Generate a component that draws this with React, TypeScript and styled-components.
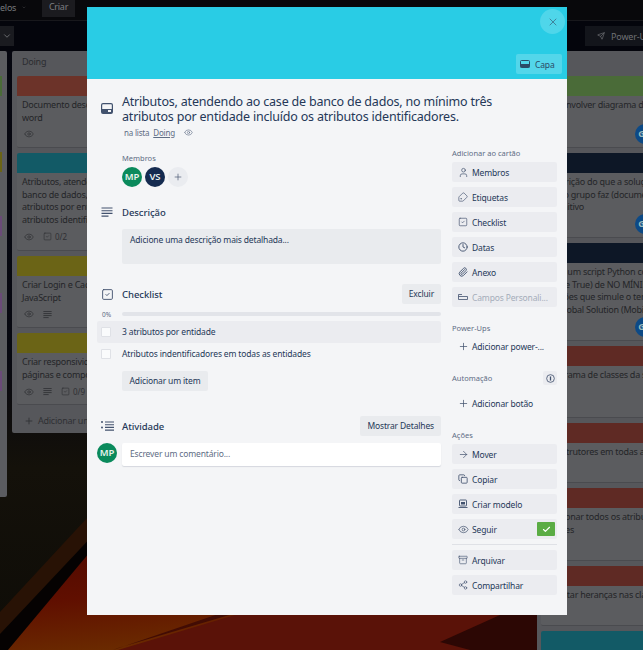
import styled, { createGlobalStyle, css } from 'styled-components';
import {
  Archive,
  ArrowRight,
  Check,
  ChevronDown,
  Clock,
  Copy,
  Eye,
  Paperclip,
  Plus,
  Send,
  Share2,
  SquareCheck,
  Tag,
  User,
  X,
} from 'lucide-react';

const FONT = `'Noto Sans', 'Open Sans', 'Liberation Sans', sans-serif`;

const GlobalStyle = createGlobalStyle`
  html, body {
    margin: 0;
    padding: 0;
    background: #000;
  }
  * {
    box-sizing: border-box;
  }
`;

const DescIcon = ({ size = 12 }: { size?: number }) => (
  <svg width={size} height={size} viewBox="0 0 12 12" fill="none" stroke="currentColor" strokeWidth="1.1">
    <path d="M0.5 2h11M0.5 4.7h11M0.5 7.4h11M0.5 10.1h7" />
  </svg>
);

const ActivityIcon = () => (
  <svg width="13" height="12" viewBox="0 0 13 12" fill="none" stroke="currentColor" strokeWidth="1.1">
    <path d="M4 2h9M4 4.7h9M4 7.4h9M4 10.1h9" />
    <circle cx="1" cy="2" r="1" fill="currentColor" stroke="none" />
    <circle cx="1" cy="7.4" r="1" fill="currentColor" stroke="none" />
  </svg>
);

const CardIcon = () => (
  <svg width="12" height="11" viewBox="0 0 12 11" fill="none">
    <rect x="0.6" y="0.6" width="10.8" height="9.8" rx="1.4" stroke="currentColor" strokeWidth="1.2" />
    <rect x="1" y="6" width="10" height="4" fill="currentColor" />
    <rect x="7" y="7" width="3" height="2" fill="#f4f5f7" />
  </svg>
);

const CoverIcon = () => (
  <svg width="10" height="8" viewBox="0 0 10 8" fill="none">
    <rect x="0.5" y="0.5" width="9" height="7" rx="1" stroke="currentColor" />
    <rect x="0.5" y="4" width="9" height="3.5" fill="currentColor" />
  </svg>
);

const TemplateIcon = () => (
  <svg width="10" height="10" viewBox="0 0 10 10" fill="none" stroke="currentColor" strokeWidth="0.9">
    <rect x="1.5" y="1" width="7" height="6" rx="0.6" />
    <rect x="3" y="3" width="4" height="2.5" fill="currentColor" stroke="none" />
    <path d="M0.5 8.5h9" />
  </svg>
);

const FieldsIcon = () => (
  <svg width="10" height="8" viewBox="0 0 10 8" fill="none" stroke="currentColor" strokeWidth="0.8">
    <path d="M0.5 1.5h3.5M0.5 1.5v5h9v-3h-9" />
  </svg>
);

const InfoIcon = () => (
  <svg width="9" height="9" viewBox="0 0 11 11" fill="none" stroke="currentColor">
    <circle cx="5.5" cy="5.5" r="4.7" />
    <path d="M5.5 3v5" strokeWidth="1.6" />
  </svg>
);

const Wallpaper = () => (
  <WallpaperSvg viewBox="0 0 643 650" preserveAspectRatio="none">
    <defs>
      <linearGradient id="night" x1="0" y1="0" x2="0" y2="1">
        <stop offset="0" stopColor="#05060f" />
        <stop offset="0.55" stopColor="#070810" />
        <stop offset="0.72" stopColor="#14110a" />
        <stop offset="1" stopColor="#0e0c07" />
      </linearGradient>
      <linearGradient id="ember" x1="0" y1="0" x2="0.3" y2="1">
        <stop offset="0" stopColor="#4e0800" />
        <stop offset="0.55" stopColor="#600f00" />
        <stop offset="1" stopColor="#6a2a00" />
      </linearGradient>
    </defs>
    <rect width="643" height="650" fill="url(#night)" />
    <polygon points="150,450 0,612 0,640 100,530 170,470" fill="#281205" />
    <polygon points="0,634 0,650 8,650 110,535 96,532" fill="#050202" />
    <polygon points="8,650 100,540 240,560 330,650" fill="url(#ember)" />
    <polygon points="118,650 235,615 560,600 540,650" fill="#5a1208" />
    <polygon points="113,650 118,648 236,613 230,610" fill="#420c04" />
    <polygon points="440,642 500,615 540,605 540,650 470,650" fill="#2c0704" />
  </WallpaperSvg>
);

type BoardCard = {
  cover: string;
  lines: string[];
  height: number;
  eye?: boolean;
  desc?: boolean;
  checks?: string;
  member?: boolean;
};

const doingCards: BoardCard[] = [
  {
    cover: '#6c3329',
    height: 72,
    lines: ['Documento descritivo do projeto em', 'word'],
    eye: true,
  },
  {
    cover: '#125a66',
    height: 98,
    lines: ['Atributos, atendendo ao case de', 'banco de dados, no mínimo três', 'atributos por entidade incluído os', 'atributos identificadores.'],
    eye: true,
    checks: '0/2',
  },
  {
    cover: '#6b6416',
    height: 72,
    lines: ['Criar Login e Cadastro com', 'JavaScript'],
    eye: true,
    desc: true,
  },
  {
    cover: '#6b6416',
    height: 72,
    lines: ['Criar responsividade em todas as', 'páginas e componentes'],
    eye: true,
    desc: true,
    checks: '0/9',
  },
];

const rightCards: BoardCard[] = [
  { cover: '#4a6b38', height: 72, lines: ['Desenvolver diagrama de'], member: true },
  {
    cover: '#0d1726',
    height: 85,
    lines: ['Descrição do que a solução', 'que o grupo faz (documento', 'Definitivo'],
    member: true,
  },
  {
    cover: '#0d1726',
    height: 98,
    lines: ['Criar um script Python com', '(ou se True) de NO MÍNIMO', 'funções que simule o tempo', 'na Global Solution (Mobile'],
    member: true,
  },
  { cover: '#5f2a24', height: 72, lines: ['Diagrama de classes da solução'] },
  { cover: '#5f2a24', height: 60, lines: ['Construtores em todas as'] },
  { cover: '#5f2a24', height: 73, lines: ['Adicionar todos os atributos', 'classes'] },
  { cover: '#5f2a24', height: 60, lines: ['Adaptar heranças nas classes'] },
  { cover: '#125a66', height: 60, lines: [] },
];

const LabelTag = styled(Tag)`
  transform: rotate(-90deg);
`;

const addActions = [
  { icon: <User size={11} strokeWidth={1.5} />, label: 'Membros' },
  { icon: <LabelTag size={10} strokeWidth={1.6} />, label: 'Etiquetas' },
  { icon: <SquareCheck size={10} strokeWidth={1.6} />, label: 'Checklist' },
  { icon: <Clock size={10} strokeWidth={2.2} />, label: 'Datas' },
  { icon: <Paperclip size={10} strokeWidth={2.2} />, label: 'Anexo' },
];

const BoardList = ({ cards }: { cards: BoardCard[] }) => (
  <>
    {cards.map((card, i) => (
      <Card key={i} $height={card.height}>
        <Cover $color={card.cover} />
        <CardText>
          {card.lines.map((line) => (
            <div key={line}>{line}</div>
          ))}
        </CardText>
        {card.eye && (
          <Meta>
            <Eye size={10} strokeWidth={1.6} />
            {card.desc && <DescIcon size={9} />}
            {card.checks && (
              <MetaItem>
                <SquareCheck size={9} strokeWidth={1.6} /> {card.checks}
              </MetaItem>
            )}
          </Meta>
        )}
        {card.member && (
          <MemberRow>
            <MiniAvatar>G</MiniAvatar>
          </MemberRow>
        )}
      </Card>
    ))}
  </>
);

const App = () => (
  <>
    <GlobalStyle />
    <Page>
      <Wallpaper />
      <TopBar>
        <TopLink>
          elos <ChevronDown size={9} />
        </TopLink>
        <CreateButton>Criar</CreateButton>
      </TopBar>
      <BoardBar>
        <BoardMenu>
          <ChevronDown size={10} />
        </BoardMenu>
        <PowerUps>
          <Send size={8} /> Power-Ups
        </PowerUps>
      </BoardBar>
      <Lists>
        <LeftStub>
          <Strip $color="#4a6b38" $top={25} />
          <Strip $color="#6b6416" $top={56} />
          <Strip $color="#6a4a78" $top={44} />
          <Strip $color="#6a4a78" $top={57} />
          <Strip $color="#6a4a78" $top={58} />
        </LeftStub>
        <DoingList>
          <ListTitle>Doing</ListTitle>
          <BoardList cards={doingCards} />
          <ListFooter>
            <Plus size={10} /> Adicionar um cartão
          </ListFooter>
        </DoingList>
        <RightList>
          <BoardList cards={rightCards} />
        </RightList>
      </Lists>

      <Modal>
        <CoverBand>
          <CloseButton>
            <X size={12} strokeWidth={1.6} />
          </CloseButton>
          <CoverButton>
            <CoverIcon /> Capa
          </CoverButton>
        </CoverBand>
        <ModalBody>
          <TitleRow>
            <TitleIcon>
              <CardIcon />
            </TitleIcon>
            <div>
              <Title>
                Atributos, atendendo ao case de banco de dados, no mínimo três atributos por entidade incluído os atributos identificadores.
              </Title>
              <ListRef>
                na lista <u>Doing</u> <Eye size={9} strokeWidth={1.6} />
              </ListRef>
            </div>
          </TitleRow>

          <Main>
            <MembersBlock>
              <SmallLabel>Membros</SmallLabel>
              <Avatars>
                <Avatar $color="#0a8a5c">MP</Avatar>
                <Avatar $color="#152b50">VS</Avatar>
                <AddMember>
                  <Plus size={10} strokeWidth={1.6} />
                </AddMember>
              </Avatars>
            </MembersBlock>

            <HeadingRow $top={18}>
              <Gutter>
                <DescIcon />
              </Gutter>
              <Heading>Descrição</Heading>
            </HeadingRow>
            <DescriptionBox>Adicione uma descrição mais detalhada...</DescriptionBox>

            <ChecklistHead>
              <Gutter>
                <SquareCheck size={13} strokeWidth={1.7} />
              </Gutter>
              <Heading>Checklist</Heading>
              <GrayButton>Excluir</GrayButton>
            </ChecklistHead>
            <ProgressRow>
              <Percent>0%</Percent>
              <ProgressBar />
            </ProgressRow>
            <ChecklistItem $active>
              <CheckBox />3 atributos por entidade
            </ChecklistItem>
            <ChecklistItem>
              <CheckBox />
              Atributos indentificadores em todas as entidades
            </ChecklistItem>
            <AddItemButton>Adicionar um item</AddItemButton>

            <ActivityHead>
              <Gutter>
                <ActivityIcon />
              </Gutter>
              <Heading>Atividade</Heading>
              <GrayButton>Mostrar Detalhes</GrayButton>
            </ActivityHead>
            <CommentRow>
              <Avatar $color="#0a8a5c">MP</Avatar>
              <CommentInput>Escrever um comentário...</CommentInput>
            </CommentRow>
          </Main>

          <Sidebar>
            <SideLabel>Adicionar ao cartão</SideLabel>
            <SideStack>
              {addActions.map((action) => (
                <SideButton key={action.label}>
                  <SideIcon>{action.icon}</SideIcon>
                  {action.label}
                </SideButton>
              ))}
              <SideButton $muted>
                <SideIcon>
                  <FieldsIcon />
                </SideIcon>
                Campos Personali...
              </SideButton>
            </SideStack>

            <SideLabel $top={16}>Power-Ups</SideLabel>
            <PlainSideButton $top={3}>
              <SideIcon>
                <Plus size={11} strokeWidth={1.6} />
              </SideIcon>
              Adicionar power-...
            </PlainSideButton>

            <AutomationLabel>
              Automação
              <InfoBadge>
                <InfoIcon />
              </InfoBadge>
            </AutomationLabel>
            <PlainSideButton $top={10}>
              <SideIcon>
                <Plus size={11} strokeWidth={1.6} />
              </SideIcon>
              Adicionar botão
            </PlainSideButton>

            <SideLabel $top={17}>Ações</SideLabel>
            <SideStack>
              <SideButton>
                <SideIcon>
                  <ArrowRight size={11} strokeWidth={1.5} />
                </SideIcon>
                Mover
              </SideButton>
              <SideButton>
                <SideIcon>
                  <Copy size={10} strokeWidth={2} />
                </SideIcon>
                Copiar
              </SideButton>
              <SideButton>
                <SideIcon>
                  <TemplateIcon />
                </SideIcon>
                Criar modelo
              </SideButton>
              <SideButton>
                <SideIcon>
                  <Eye size={11} strokeWidth={1.5} />
                </SideIcon>
                Seguir
                <FollowCheck>
                  <Check size={9} strokeWidth={3} />
                </FollowCheck>
              </SideButton>
            </SideStack>
            <SideDivider />
            <SideStack $flush>
              <SideButton>
                <SideIcon>
                  <Archive size={10} strokeWidth={1.5} />
                </SideIcon>
                Arquivar
              </SideButton>
              <SideButton>
                <SideIcon>
                  <Share2 size={10} strokeWidth={1.5} />
                </SideIcon>
                Compartilhar
              </SideButton>
            </SideStack>
          </Sidebar>
        </ModalBody>
      </Modal>
    </Page>
  </>
);

export default App;

const smallText = css`
  font-size: 8.5px;
  letter-spacing: -0.15px;
`;

const boardText = css`
  font-size: 9px;
  letter-spacing: -0.25px;
`;

const Page = styled.div`
  position: relative;
  width: 643px;
  height: 650px;
  overflow: hidden;
  font-family: ${FONT};
`;

const WallpaperSvg = styled.svg`
  position: absolute;
  inset: 0;
  width: 100%;
  height: 100%;
`;

const TopBar = styled.header`
  position: relative;
  display: flex;
  align-items: flex-start;
  gap: 16px;
  height: 21px;
  background: #08080b;
  border-bottom: 1px solid #18181c;
  color: #77787c;
  ${boardText}
`;

const TopLink = styled.div`
  display: flex;
  align-items: center;
  gap: 6px;
  width: 26px;
  height: 14px;
`;

const CreateButton = styled.div`
  width: 33px;
  height: 17px;
  background: #1b1b1f;
  text-align: center;
  line-height: 14px;
  color: #7d7e82;
`;

const BoardBar = styled.div`
  position: relative;
  display: flex;
  align-items: center;
  justify-content: space-between;
  height: 30px;
  background: #04050c;
`;

const BoardMenu = styled.div`
  display: flex;
  align-items: center;
  justify-content: flex-end;
  width: 14px;
  height: 20px;
  padding-right: 2px;
  background: #1a1b20;
  color: #77787c;
`;

const PowerUps = styled.div`
  display: flex;
  align-items: center;
  gap: 6px;
  width: 90px;
  height: 20px;
  margin-right: -32px;
  padding-left: 12px;
  background: #13151b;
  color: #6f7175;
  font-size: 9px;
  letter-spacing: -0.15px;
  white-space: nowrap;

  svg {
    flex: none;
  }
`;

const Lists = styled.main`
  position: relative;
  display: flex;
  align-items: flex-start;
  gap: 5px;
`;

const LeftStub = styled.div`
  flex: none;
  width: 7px;
  height: 446px;
  overflow: hidden;
  background: #5b5c60;
  border-radius: 0 2px 2px 0;
`;

const Strip = styled.div<{ $color: string; $top: number }>`
  width: 2px;
  height: 20px;
  margin-top: ${({ $top }) => $top}px;
  background: ${({ $color }) => $color};
`;

const DoingList = styled.section`
  flex: none;
  display: flex;
  flex-direction: column;
  gap: 5px;
  width: 272px;
  height: 382px;
  padding: 0 5px;
  background: #56575b;
  border-radius: 2px;
`;

const RightList = styled.section`
  flex: none;
  display: flex;
  flex-direction: column;
  gap: 5px;
  width: 128px;
  margin-left: 248px;
  padding: 25px 4px 0;
  background: #56575b;
`;

const ListTitle = styled.h2`
  margin: 0;
  height: 20px;
  padding: 4px 5px 0;
  color: #2b2c30;
  font-weight: 400;
  line-height: 14px;
  ${boardText}
`;

const Card = styled.article<{ $height: number }>`
  flex: none;
  position: relative;
  height: ${({ $height }) => $height}px;
  background: #5b5c5f;
  border-bottom: 1px solid #4a4b4f;
  border-radius: 2px;
  overflow: hidden;
`;

const Cover = styled.div<{ $color: string }>`
  height: 20px;
  background: ${({ $color }) => $color};
`;

const CardText = styled.div`
  padding: 3px 5px 0;
  color: #242528;
  line-height: 12.6px;
  white-space: nowrap;
  ${boardText}
`;

const Meta = styled.div`
  display: flex;
  align-items: center;
  gap: 9px;
  margin-top: 5px;
  padding-left: 7px;
  color: #2f3034;
`;

const MetaItem = styled.span`
  display: inline-flex;
  align-items: center;
  gap: 3px;
  font-size: 8px;
`;

const MemberRow = styled.div`
  position: absolute;
  right: 6px;
  bottom: 3px;
`;

const MiniAvatar = styled.div`
  width: 20px;
  height: 20px;
  padding-right: 7px;
  border-radius: 50%;
  background: #0d4a86;
  color: #9bb;
  font-size: 9px;
  font-weight: 700;
  line-height: 20px;
  text-align: center;
`;

const ListFooter = styled.div`
  display: flex;
  align-items: center;
  gap: 4px;
  margin-top: 4px;
  padding-left: 7px;
  color: #2f3034;
  ${boardText}
`;

const Modal = styled.div`
  position: absolute;
  top: 7px;
  left: 87px;
  width: 480px;
  height: 608px;
  background: #f4f5f7;
`;

const CoverBand = styled.div`
  position: relative;
  display: flex;
  justify-content: flex-end;
  align-items: flex-end;
  height: 72px;
  padding: 0 5px 5px 0;
  background: #29cce5;
`;

const CloseButton = styled.button`
  position: absolute;
  top: 2px;
  right: 2px;
  display: flex;
  align-items: center;
  justify-content: center;
  width: 25px;
  height: 25px;
  padding: 0;
  border: 0;
  border-radius: 50%;
  background: #4fd6ea;
  color: #3a6f88;
`;

const CoverButton = styled.div`
  display: flex;
  align-items: center;
  gap: 5px;
  width: 46px;
  height: 20px;
  padding-left: 4px;
  border-radius: 2px;
  background: #53d6ea;
  color: #2b4a66;
  ${smallText}
`;

const ModalBody = styled.div`
  display: grid;
  grid-template-columns: 344px 105px;
  column-gap: 11px;
  padding: 15px 10px 0;
`;

const TitleRow = styled.div`
  grid-column: 1 / -1;
  display: grid;
  grid-template-columns: 25px 400px;
`;

const TitleIcon = styled.div`
  padding: 3px 0 0 4px;
  color: #42526e;
`;

const Main = styled.div`
  display: flex;
  flex-direction: column;
  min-width: 0;
`;

const Gutter = styled.div`
  flex: none;
  display: flex;
  align-items: center;
  width: 25px;
  padding-left: 4px;
  color: #42526e;
`;

const Title = styled.h1`
  margin: 0;
  color: #253858;
  font-size: 12.5px;
  font-weight: 400;
  letter-spacing: -0.2px;
  line-height: 15px;
`;

const ListRef = styled.div`
  display: flex;
  align-items: center;
  gap: 4px;
  height: 12px;
  margin-top: 2px;
  padding-left: 2px;
  color: #5e6c84;
  font-size: 8px;
  letter-spacing: -0.2px;

  svg {
    margin-left: 5px;
  }
`;

const MembersBlock = styled.div`
  margin: 15px 0 0 25px;
`;

const SmallLabel = styled.div`
  height: 10px;
  color: #5e6c84;
  font-size: 7.5px;
  line-height: 10px;
`;

const Avatars = styled.div`
  display: flex;
  gap: 3px;
  margin-top: 4px;
`;

const Avatar = styled.div<{ $color: string }>`
  flex: none;
  width: 20px;
  height: 20px;
  border-radius: 50%;
  background: ${({ $color }) => $color};
  color: #e8f2ee;
  font-size: 9.5px;
  font-weight: 600;
  line-height: 20px;
  text-align: center;
`;

const AddMember = styled.div`
  display: flex;
  align-items: center;
  justify-content: center;
  width: 20px;
  height: 20px;
  border-radius: 50%;
  background: #eaecf0;
  color: #42526e;
`;

const HeadingRow = styled.div<{ $top: number }>`
  display: flex;
  align-items: center;
  height: 14px;
  margin-top: ${({ $top }) => $top}px;
`;

const Heading = styled.h3`
  flex: 1;
  margin: 0;
  color: #253858;
  font-size: 9.5px;
  font-weight: 500;
  letter-spacing: -0.05px;
`;

const DescriptionBox = styled.div`
  height: 35px;
  margin: 10px 0 0 25px;
  padding: 5px 8px;
  border-radius: 2px;
  background: #e9ebee;
  color: #253858;
  line-height: 12px;
  ${smallText}
`;

const ChecklistHead = styled.div`
  display: flex;
  align-items: center;
  height: 20px;
  margin-top: 20px;
`;

const ActivityHead = styled(ChecklistHead)`
  margin-top: 25px;
`;

const GrayButton = styled.div`
  height: 20px;
  padding: 0 7px;
  border-radius: 2px;
  background: #e9ebee;
  color: #253858;
  line-height: 19px;
  ${smallText}
`;

const ProgressRow = styled.div`
  display: flex;
  align-items: center;
  height: 4px;
  margin: 8px 0 5px;
`;

const Percent = styled.div`
  width: 25px;
  padding-left: 5px;
  color: #5e6c84;
  font-size: 6.5px;
`;

const ProgressBar = styled.div`
  flex: 1;
  height: 4px;
  border-radius: 2px;
  background: #e2e4e9;
`;

const ChecklistItem = styled.div<{ $active?: boolean }>`
  display: flex;
  align-items: center;
  height: 22px;
  padding: 0 0 1px 4px;
  border-radius: 2px;
  background: ${({ $active }) => ($active ? '#ebecf0' : 'transparent')};
  color: #253858;
  ${smallText}
`;

const CheckBox = styled.span`
  flex: none;
  width: 10px;
  height: 10px;
  margin-right: 11px;
  border-radius: 1px;
  background: #fafbfc;
  box-shadow: inset 0 0 0 1px #dfe1e6;
`;

const AddItemButton = styled(GrayButton)`
  align-self: flex-start;
  width: 86px;
  margin: 6px 0 0 25px;
  padding: 0;
  text-align: center;
`;

const CommentRow = styled.div`
  display: flex;
  gap: 5px;
  margin-top: 7px;
`;

const CommentInput = styled.div`
  flex: 1;
  height: 23px;
  padding-left: 8px;
  border-radius: 2px;
  background: #fff;
  box-shadow: 0 1px 1px #d5d8de;
  color: #5e6c84;
  line-height: 22px;
  ${smallText}
`;

const Sidebar = styled.aside`
  display: flex;
  flex-direction: column;
  padding-top: 10px;
`;

const SideLabel = styled.div<{ $top?: number }>`
  height: 10px;
  margin-top: ${({ $top }) => $top ?? 0}px;
  color: #5e6c84;
  font-size: 7.5px;
  line-height: 10px;
`;

const AutomationLabel = styled(SideLabel)`
  display: flex;
  justify-content: space-between;
  align-items: center;
  margin-top: 17px;
`;

const InfoBadge = styled.span`
  display: flex;
  align-items: center;
  justify-content: center;
  width: 14px;
  height: 14px;
  border-radius: 2px;
  background: #ebecf0;
  color: #42526e;
`;

const SideStack = styled.div<{ $flush?: boolean }>`
  display: flex;
  flex-direction: column;
  gap: 5px;
  margin-top: ${({ $flush }) => ($flush ? 0 : 4)}px;
`;

const SideButton = styled.div<{ $muted?: boolean }>`
  display: flex;
  align-items: center;
  height: 20px;
  border-radius: 2px;
  background: #ebecf0;
  color: ${({ $muted }) => ($muted ? '#a5adba' : '#253858')};
  white-space: nowrap;
  ${smallText}
`;

const PlainSideButton = styled(SideButton)<{ $top: number }>`
  margin-top: ${({ $top }) => $top}px;
  background: transparent;
`;

const SideIcon = styled.span`
  display: flex;
  align-items: center;
  flex: none;
  width: 20px;
  padding-left: 6px;
  color: #42526e;
`;

const FollowCheck = styled.span`
  display: flex;
  align-items: center;
  justify-content: center;
  width: 18px;
  height: 14px;
  margin-left: auto;
  margin-right: 2px;
  border-radius: 1px;
  background: #5aac44;
  color: #fff;
`;

const SideDivider = styled.div`
  height: 1px;
  margin: 5px 0;
  background: #dfe1e6;
`;
